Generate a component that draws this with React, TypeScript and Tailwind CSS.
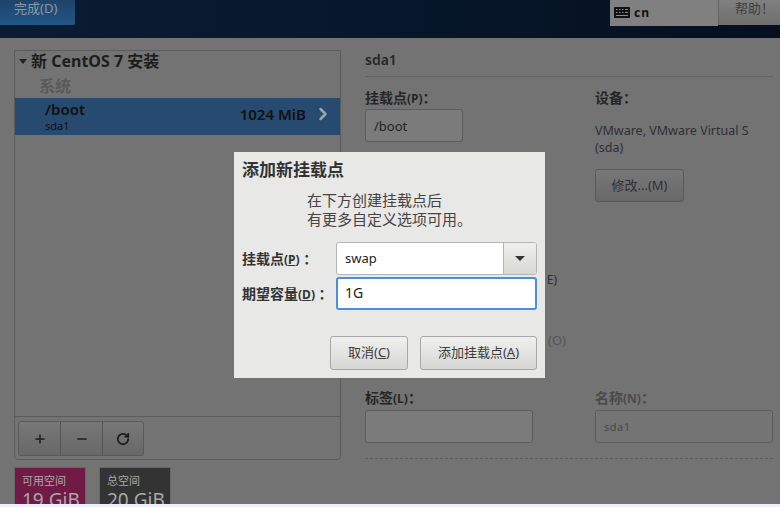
import { ChevronRight, Minus, Plus, RotateCw } from "lucide-react";

const FONT = "font-['Noto_Sans','Noto_Sans_CJK_SC',sans-serif]";

function KeyboardGlyph() {
  return (
    <svg width="16" height="12" viewBox="0 0 16 12" className="shrink-0">
      <rect width="16" height="11" rx="1" fill="#111" />
      <path
        d="M2 2.5h1.5M5 2.5h1.5M8 2.5h1.5M11 2.5h3M2 5.5h1.5M5 5.5h1.5M8 5.5h1.5M11 5.5h3M2 8.5h12"
        stroke="#8a8a8a"
        strokeWidth="1.2"
      />
    </svg>
  );
}

function FieldLabel({ text, mnemonic, dim }: { text: string; mnemonic?: string; dim?: boolean }) {
  return (
    <div className={`h-[17px] text-[14px] leading-[17px] font-bold whitespace-nowrap ${dim ? "text-[#4a4a4a]" : "text-[#262626]"}`}>
      {text}
      {mnemonic && <span className="text-[12px]">({mnemonic})</span>}：
    </div>
  );
}

function DialogButton({ children, width }: { children: React.ReactNode; width: string }) {
  return (
    <div className={`${width} h-[34px] flex items-center justify-center rounded-[3px] border border-[#a8a8a8] bg-gradient-to-b from-[#f0f0ef] to-[#d6d6d4] text-[13px] text-[#3c3c3c]`}>
      {children}
    </div>
  );
}

function AddMountDialog() {
  return (
    <div className="absolute left-[234px] top-[152px] w-[311px] h-[226px] bg-[#e8e8e7] px-2 pt-[7px] text-[#2e3436]">
      <div className="text-[17px] leading-[21px] font-bold text-[#333]">添加新挂载点</div>
      <div className="mt-[11px] ml-[65px] text-[15px] leading-[19px] text-[#444]">
        <div>在下方创建挂载点后</div>
        <div>有更多自定义选项可用。</div>
      </div>
      <div className="mt-[13px] flex items-center">
        <div className="w-[94px] text-[14px] font-bold text-[#333] whitespace-nowrap">
          挂载点<span className="text-[12px]">(<u>P</u>)</span> ：
        </div>
        <div className="w-[201px] h-[33px] flex rounded-[3px] border border-[#b5b5b5] bg-white overflow-hidden">
          <div className="flex-1 pl-2 text-[13px] leading-[31px] text-[#222]">swap</div>
          <div className="w-[33px] flex items-center justify-center border-l border-[#b5b5b5] bg-gradient-to-b from-[#efefee] to-[#d8d8d6]">
            <div className="border-x-[5px] border-x-transparent border-t-[5px] border-t-[#333]" />
          </div>
        </div>
      </div>
      <div className="mt-[2px] flex items-center">
        <div className="w-[94px] text-[14px] font-bold text-[#333] whitespace-nowrap">
          期望容量<span className="text-[12px]">(<u>D</u>)</span> ：
        </div>
        <div className="w-[201px] h-[33px] rounded-[3px] border-2 border-[#4a90d9] bg-white pl-[7px] text-[14px] leading-[28px] text-[#222]">
          1G
        </div>
      </div>
      <div className="mt-[26px] flex justify-end gap-[12px] w-[295px]">
        <DialogButton width="w-[78px]">
          取消(<u>C</u>)
        </DialogButton>
        <DialogButton width="w-[117px]">
          添加挂载点(<u>A</u>)
        </DialogButton>
      </div>
    </div>
  );
}

export default function App() {
  return (
    <div className={`${FONT} relative w-[780px] h-[507px] overflow-hidden flex flex-col bg-[#737373]`}>
      {/* top bar */}
      <header className="h-[38px] shrink-0 flex items-start justify-between bg-gradient-to-r from-[#0b1c33] via-[#07172b] to-[#04101f]">
        <div className="w-[75px] h-[25px] rounded-br-[2px] bg-gradient-to-b from-[#1d4469] to-[#235688] pl-[14px] text-[13px] leading-[17px] text-[#8d99a6]">
          完成(D)
        </div>
        <div className="flex">
          <div className="w-[108px] h-[26px] flex items-center gap-[4px] bg-[#808080] pl-1 text-[12px] font-bold text-[#111] tracking-[1px]">
            <KeyboardGlyph />
            cn
          </div>
          <div className="w-[62px] h-[25px] border-l border-[#666] bg-gradient-to-b from-[#808080] to-[#6e6e6e] pl-[16px] text-[13px] leading-[17px] text-[#3f3f3f] whitespace-nowrap">
            帮助！
          </div>
        </div>
      </header>

      <main className="flex-1 min-h-0 flex overflow-hidden pl-[14px] pt-[12px]">
        {/* left column */}
        <section className="w-[327px] shrink-0 flex flex-col">
          <div className="h-[410px] shrink-0 flex flex-col rounded-b-[4px] border border-[#5c5c5c]">
            <div className="h-[20px] flex items-center gap-[4px] pl-[4px] text-[16px] font-bold text-[#1d1d1d]">
              <div className="border-x-[4px] border-x-transparent border-t-[5px] border-t-[#222]" />
              新 CentOS 7 安装
            </div>
            <div className="h-[27px] pl-[24px] text-[16px] leading-[30px] font-bold text-[#5a5a5a]">系统</div>
            <div className="h-[37px] flex items-center justify-between bg-[#264a70] pr-[7px] pl-[30px]">
              <div>
                <div className="text-[15px] leading-[19px] font-semibold text-[#111]">/boot</div>
                <div className="text-[11px] leading-[14px] text-[#111]">sda1</div>
              </div>
              <div className="flex items-center gap-[7px] text-[15px] leading-[20px] font-semibold text-[#111] mb-[6px]">
                1024 MiB
                <ChevronRight size={20} strokeWidth={3} className="text-[#9aa2aa]" />
              </div>
            </div>
            <div className="flex-1" />
            <div className="h-[43px] border-t border-[#5c5c5c] pl-[3px] pt-[4px]">
              <div className="w-[126px] h-[35px] flex rounded-[3px] border border-[#5a5a5a] bg-gradient-to-b from-[#787878] to-[#686868] text-[#1c1c1c]">
                <div className="w-[42px] flex items-center justify-center border-r border-[#555]">
                  <Plus size={14} strokeWidth={2.5} />
                </div>
                <div className="w-[42px] flex items-center justify-center border-r border-[#555]">
                  <Minus size={14} strokeWidth={2.5} />
                </div>
                <div className="flex-1 flex items-center justify-center">
                  <RotateCw size={14} strokeWidth={3} />
                </div>
              </div>
            </div>
          </div>
          <div className="mt-[7px] flex gap-[13px]">
            <div className="w-[72px] h-[60px] border border-[#666] bg-[#701a45] pl-[7px] text-[#a8a8a8]">
              <div className="text-[11px] leading-[14px] mt-[6px]">可用空间</div>
              <div className="text-[19px] leading-[20px] mt-[2px] whitespace-nowrap">19 GiB</div>
            </div>
            <div className="w-[72px] h-[60px] border border-[#666] bg-[#333333] pl-[7px] text-[#a8a8a8]">
              <div className="text-[11px] leading-[14px] mt-[6px]">总空间</div>
              <div className="text-[19px] leading-[20px] mt-[2px] whitespace-nowrap">20 GiB</div>
            </div>
          </div>
        </section>

        {/* right column */}
        <section className="ml-[24px] w-[408px] shrink-0 flex flex-col">
          <div className="h-[27px] border-b border-[#646464] text-[14px] leading-[20px] font-semibold text-[#262626]">
            sda1
          </div>
          <div className="mt-[12px] flex h-[300px]">
            <div className="w-[230px] shrink-0">
              <FieldLabel text="挂载点" mnemonic="P" />
              <div className="mt-[3px] w-[98px] h-[33px] rounded-[3px] border border-[#5c5c5c] bg-[#7b7b7b] pl-2 text-[13px] leading-[33px] text-[#222]">
                /boot
              </div>
              <div className="mt-[8px]">
                <FieldLabel text="期望容量" mnemonic="D" />
              </div>
              <div className="mt-[104px] w-[192px] text-right text-[12px] leading-[17px] text-[#303030] whitespace-nowrap">
                E)
              </div>
              <div className="mt-[44px] w-[201px] text-right text-[13px] leading-[17px] text-[#555] whitespace-nowrap">
                (O)
              </div>
            </div>
            <div className="flex-1">
              <FieldLabel text="设备" />
              <div className="mt-[16px] text-[12.5px] leading-[17px] text-[#303030] whitespace-nowrap">
                <div>VMware, VMware Virtual S</div>
                <div>(sda)</div>
              </div>
              <div className="mt-[13px] w-[89px] h-[33px] rounded-[3px] border border-[#5a5a5a] bg-gradient-to-b from-[#787878] to-[#686868] text-center text-[13px] leading-[31px] text-[#303030]">
                修改...(M)
              </div>
            </div>
          </div>
          <div className="flex gap-[62px]">
            <div className="w-[168px]">
              <FieldLabel text="标签" mnemonic="L" />
              <div className="mt-[4px] h-[33px] rounded-[3px] border border-[#5c5c5c] bg-[#7b7b7b]" />
            </div>
            <div className="w-[178px]">
              <FieldLabel text="名称" mnemonic="N" dim />
              <div className="mt-[4px] h-[33px] rounded-[3px] border border-[#5c5c5c] bg-[#747474] pl-2 text-[11px] leading-[31px] text-[#4a4a4a] tracking-[0.5px]">
                sda1
              </div>
            </div>
          </div>
          <div className="mt-[15px] border-t border-dashed border-[#5c5c5c]" />
        </section>
      </main>

      <div className="h-[3px] shrink-0 bg-[#eef1fb]" />

      <AddMountDialog />
    </div>
  );
}
